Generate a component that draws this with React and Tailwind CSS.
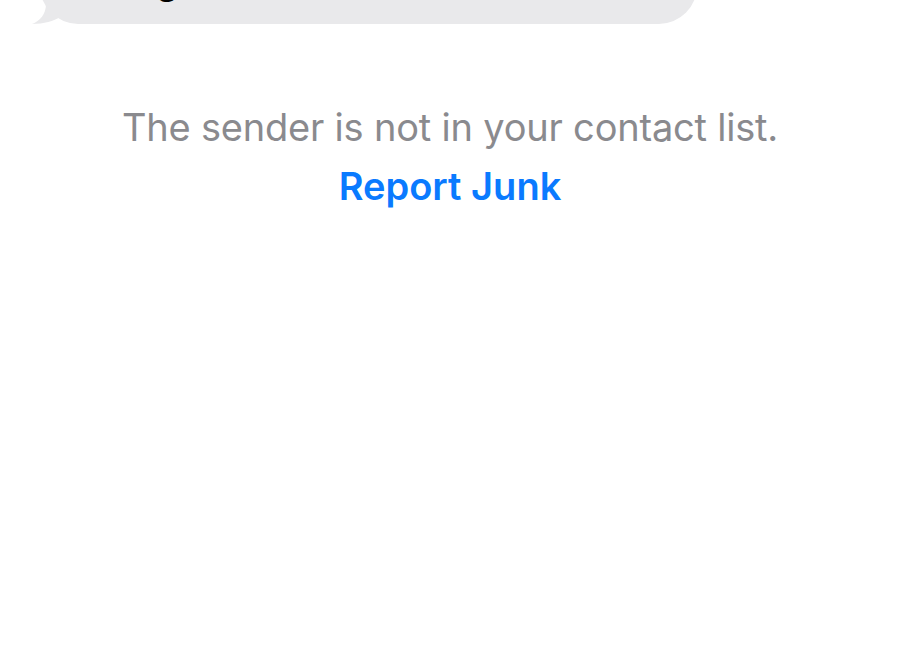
import React from 'react';

const Bubble = () => (
  <div className="relative ml-[40px] w-[657px] -mt-[56px]">
    {/* tail */}
    <svg className="absolute left-[-16px] bottom-0" width="40" height="34" viewBox="0 0 40 34">
      <path d="M22 0 V14 C22 24 16 31 8 34 C20 34 30 31 36 27 L40 27 V0 Z" fill="#e9e9eb" />
    </svg>
    <div className="relative h-[80px] rounded-[38px] bg-[#e9e9eb] pl-[46px] pt-[13px] text-[38px] leading-[46px] text-black">
      <span>Hi again</span>
    </div>
  </div>
);

export default function App() {
  return (
    <div className="w-[900px] h-[658px] overflow-hidden bg-white" style={{ fontFamily: 'Inter, "Noto Sans", sans-serif' }}>
      <Bubble />
      <div className="mt-[81px] flex flex-col items-center">
        <p className="text-[38px] leading-[44px] text-[#8a8a8e] tracking-[-0.2px]">The sender is not in your contact list.</p>
        <button className="mt-[15px] text-[38px] leading-[44px] font-semibold text-[#0a7aff]">Report Junk</button>
      </div>
    </div>
  );
}
